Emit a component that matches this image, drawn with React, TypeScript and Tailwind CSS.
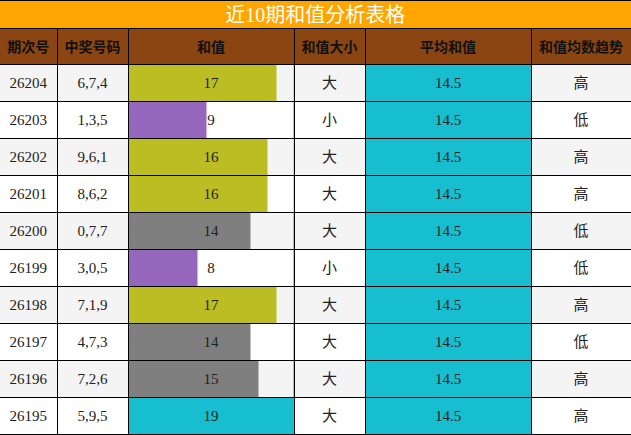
import React from "react";

const rows = [
  { issue: "26204", nums: "6,7,4", sum: 17, size: "大", trend: "高" },
  { issue: "26203", nums: "1,3,5", sum: 9, size: "小", trend: "低" },
  { issue: "26202", nums: "9,6,1", sum: 16, size: "大", trend: "高" },
  { issue: "26201", nums: "8,6,2", sum: 16, size: "大", trend: "高" },
  { issue: "26200", nums: "0,7,7", sum: 14, size: "大", trend: "低" },
  { issue: "26199", nums: "3,0,5", sum: 8, size: "小", trend: "低" },
  { issue: "26198", nums: "7,1,9", sum: 17, size: "大", trend: "高" },
  { issue: "26197", nums: "4,7,3", sum: 14, size: "大", trend: "低" },
  { issue: "26196", nums: "7,2,6", sum: 15, size: "大", trend: "高" },
  { issue: "26195", nums: "5,9,5", sum: 19, size: "大", trend: "高" },
];

const maxSum = 19;

function barColor(v: number) {
  if (v >= 19) return "#17becf";
  if (v >= 16) return "#bcbd22";
  if (v >= 10) return "#7f7f7f";
  return "#9467bd";
}

const font = { fontFamily: '"Liberation Serif", "Noto Sans CJK SC", serif' };

export default function App() {
  return (
    <div className="w-[631px] h-[435px] bg-white overflow-hidden" style={font}>
      <table className="w-[631px] border-collapse table-fixed text-[15px] text-[#222]">
        <colgroup>
          <col className="w-[57px]" />
          <col className="w-[71px]" />
          <col className="w-[166px]" />
          <col className="w-[71px]" />
          <col className="w-[166px]" />
          <col className="w-[100px]" />
        </colgroup>
        <thead>
          <tr>
            <th
              colSpan={6}
              className="h-[28px] p-0 bg-[#ffa500] text-white text-[20px] font-normal leading-none border border-black border-l-0"
            >
              近10期和值分析表格
            </th>
          </tr>
          <tr className="bg-[#8b4513]">
            {["期次号", "中奖号码", "和值", "和值大小", "平均和值", "和值均数趋势"].map((h, i) => (
              <th
                key={h}
                className={
                  "h-[36px] p-0 text-[14px] font-bold text-[#111] border border-black " +
                  (i === 0 ? "border-l-0" : "")
                }
                style={{ fontFamily: '"Noto Sans CJK SC", sans-serif' }}
              >
                {h}
              </th>
            ))}
          </tr>
        </thead>
        <tbody>
          {rows.map((r, i) => {
            const pct = (r.sum / maxSum) * 100;
            const c = barColor(r.sum);
            return (
              <tr key={r.issue} className={i % 2 === 0 ? "bg-[#f4f4f4]" : "bg-white"}>
                <td className="h-[37px] p-0 text-center border border-black border-l-0">{r.issue}</td>
                <td className="p-0 text-center border border-black">{r.nums}</td>
                <td
                  className="p-0 text-center border border-black"
                  style={{ background: `linear-gradient(90deg, ${c} ${pct}%, transparent ${pct}%)` }}
                >
                  {r.sum}
                </td>
                <td className="p-0 text-center border border-black">{r.size}</td>
                <td className="p-0 text-center border border-black bg-[#17becf]">14.5</td>
                <td className="p-0 text-center border border-black">{r.trend}</td>
              </tr>
            );
          })}
        </tbody>
      </table>
    </div>
  );
}
